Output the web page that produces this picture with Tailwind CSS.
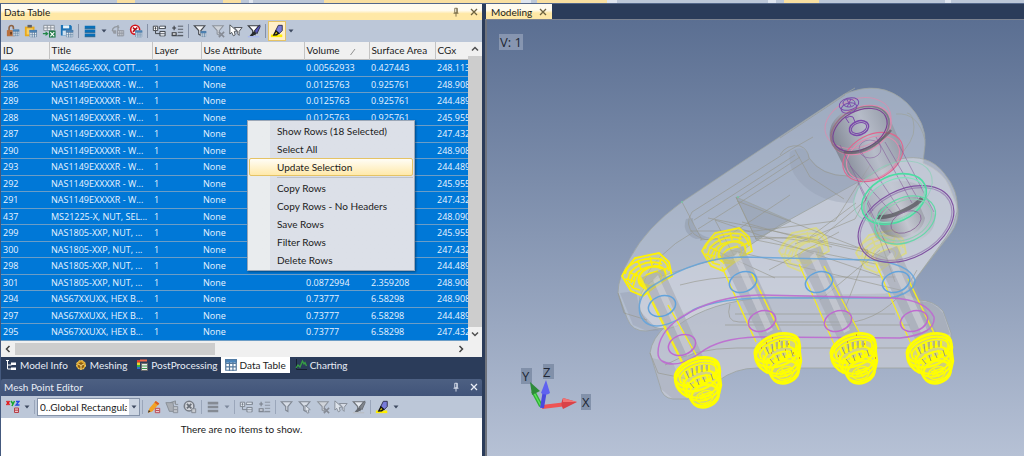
<!DOCTYPE html>
<html lang="en">
<head>
<meta charset="utf-8">
<title>Modeling</title>
<script src="https://cdn.jsdelivr.net/npm/@tailwindcss/browser@4"></script>
</head>
<body class="flex h-screen flex-col overflow-hidden bg-[#2b3c5a] font-[Lato,'Noto_Sans',sans-serif] text-[10px] leading-4 text-[#1b1b1b]">

<!-- Shared icon symbols -->
<svg class="hidden">
  <defs>
    <symbol id="grid" viewBox="0 0 8 8"><path d="M0 0h8v8H0z" fill="#fff"/><path d="M0 0h8v2.5H0z" fill="#4a86bd"/><path d="M.5 .5h7v7h-7zM.5 3h7M.5 5.2h7M3 2v6M5.3 2v6" fill="none" stroke="#54789c" stroke-width=".8"/></symbol>
    <symbol id="lock" viewBox="0 0 16 16"><path d="M3.500 8V4.500a2.500 2.800 0 0 1 5 0V6" fill="none" stroke="#8d6243" stroke-width="1.800"/><path d="M1 7h9v7H1z" fill="#b9713f"/><path d="M5 9h1.500v3H5z" fill="#4b2c16"/><use href="#grid" x="7.500" y="6" width="8" height="8"/></symbol>
    <symbol id="paste" viewBox="0 0 16 16"><path d="M1 3h11v11H1z" fill="#e8a91c"/><path d="M4 1h5v3H4z" fill="#5f6068"/><path d="M3 5h7v7H3z" fill="#f7cf64"/><use href="#grid" x="6" y="6.500" width="9" height="9"/></symbol>
    <symbol id="excel" viewBox="0 0 16 16"><path d="M2 1.500h12v6H2z" fill="#eef0f3" stroke="#848b95"/><path d="M2 4.500h12M6 1.500v6M10 1.500v6" stroke="#848b95"/><path d="M1 11h5M4 9l2.500 2L4 13" fill="none" stroke="#218747" stroke-width="1.300"/><path d="M8 7.500h7.500v8H8z" fill="#237c49"/><path d="M9.500 9.200l4.500 5M14 9.200l-4.500 5" stroke="#fff" stroke-width="1.300"/></symbol>
    <symbol id="save" viewBox="0 0 16 16"><path d="M1 1h11l1.500 1.500V13H1z" fill="#1c72b5"/><path d="M3.500 1.500h7V5h-7z" fill="#e9f2f8"/><path d="M3 7.500h5V13H3z" fill="#cfe0ef"/><use href="#grid" x="6.500" y="6.500" width="9" height="9"/></symbol>
    <symbol id="bars" viewBox="0 0 16 16"><path d="M2 2h12v3H2zM2 6.500h12v3H2zM2 11h12v3H2z" fill="#086fb8"/><path d="M2 5.500h12M2 10h12M2 14.500h12" stroke="#075080"/></symbol>
    <symbol id="bars-off" viewBox="0 0 16 16"><path d="M2 2h12v3H2zM2 6.500h12v3H2zM2 11h12v3H2z" fill="#858b94"/></symbol>
    <symbol id="sync-off" viewBox="0 0 16 16"><path d="M1.500 8a5 5 0 0 1 8-4M8 1v13" fill="none" stroke="#92989f" stroke-width="1.500"/><path d="M1 7h5v4H3z" fill="#969ba3"/><path d="M7.500 7.500h7v6h-7z" fill="#c8ccd3" stroke="#8f959e"/><path d="M7.500 10.500h7M10 8v6M12.500 8v6" stroke="#8f959e"/></symbol>
    <symbol id="stop" viewBox="0 0 16 16"><circle cx="7" cy="6.500" r="6" fill="#d4131b"/><circle cx="7" cy="6.500" r="4.200" fill="#fff"/><path d="M4.500 4l5 5M9.500 4l-5 5" stroke="#b00f16" stroke-width="2"/><use href="#grid" x="7" y="7" width="8.500" height="8.500"/></symbol>
    <symbol id="tree" viewBox="0 0 16 16"><path d="M1.500 2.500h5v5h-5zM3 5h2M4 3.500v3" fill="#fff" stroke="#34373c"/><path d="M9 2.500h6.500v2.500H8zM9 8.500h6v5H9zM4 8v3h5M9.500 11h5" fill="none" stroke="#34373c"/><path d="M9 3h5v1.500H9zM10 9.500h4v1h-4zM10 12h4v1h-4z" fill="#fff"/></symbol>
    <symbol id="collapse" viewBox="0 0 16 16"><path d="M2.500 4.500h4.500M4.700 2v5M2.500 10h4.500v3H2.500z" fill="#eee" stroke="#34373c" stroke-width="1.200"/><path d="M9 2.500h6M9 6h6M9 9.500h6M9 13h6M2 13.500h13" stroke="#4b5058"/></symbol>
    <symbol id="funnel" viewBox="0 0 16 16"><path d="M1.500 2h12L9 7.500V13l-2.500-1.500v-4z" fill="#f2f3f5" stroke="#45494f" stroke-width="1.300"/></symbol>
    <symbol id="funnel-grid" viewBox="0 0 16 16"><use href="#funnel"/><use href="#grid" x="8.500" y="7.500" width="7" height="8"/></symbol>
    <symbol id="funnel-x" viewBox="0 0 16 16"><path d="M2 2h12L9.500 7.500V13L7 11.500v-4z" fill="#d0d4da" stroke="#8c929b" stroke-width="1.200"/><path d="M9 9l6 6M15 9l-6 6" stroke="#858a94" stroke-width="1.700"/></symbol>
    <symbol id="cursor-funnel" viewBox="0 0 16 16"><path d="M6 4h9l-3.500 4.500V13L9.500 11V8z" fill="#f0f0f2" stroke="#43474e"/><path d="M1 1l8 7-3 .5 1 4-2 1-2-4-2 2z" fill="#fff" stroke="#45494e"/></symbol>
    <symbol id="funnel-brush" viewBox="0 0 16 16"><path d="M1.500 2h12L9 7.500V12L6.500 10.500v-3z" fill="#fff" stroke="#383b41" stroke-width="1.300"/><path d="M14.500 1l-6 7 3 3 3.500-8z" fill="#5554bd" stroke="#2b2b40"/><path d="M8 8l3 3-5 3-3-.500z" fill="#272a2e"/><path d="M1 14.500h13" stroke="#a8b7ef" stroke-width="1.500"/></symbol>
    <symbol id="brush" viewBox="0 0 16 16"><path d="M1 12h13v3H1z" fill="#ffee00"/><path d="M9.500 1.500h4.500v6l-4 4-3.500-4z" fill="#777bd9" stroke="#272746"/><path d="M6.500 6.500l4.500 4-3 2.500-5 .5z" fill="#151515"/><path d="M7 9l1.500 1.500-3 1.500z" fill="#f9e500"/></symbol>
    <symbol id="pencil" viewBox="0 0 16 16"><path d="M10 1l4 3-8 9-5 1.500L3 9z" fill="#f2a326"/><path d="M10 1l4 3-1.500 2-4-3.200z" fill="#d95d27"/><path d="M1 14.500l1-3 2 1.500z" fill="#44352e"/><path d="M9.500 9.500h5v5h-5zM10 12h4" fill="#eacbd0" stroke="#b83f48"/></symbol>
    <symbol id="delete-off" viewBox="0 0 16 16"><path d="M1 3h8l2 10H5zM6 3l6-2v4h3" fill="#a9adb4" stroke="#858b94"/><path d="M9.500 7.500h5v7h-5zM10 11h4" fill="#bfc3ca" stroke="#878d96"/></symbol>
    <symbol id="stop-off" viewBox="0 0 16 16"><circle cx="7" cy="7" r="5.500" fill="#d3d6dc" stroke="#777d87" stroke-width="1.800"/><path d="M4.500 4.500l5 5M9.500 4.500l-5 5" stroke="#686e77" stroke-width="2"/><path d="M10 10h4.500v4.500H10z" fill="#c8cbd0" stroke="#7e848d"/></symbol>
    <symbol id="pin" viewBox="0 0 8 12"><path d="M2.500 1.500h3V7h-3zM5 1.500V7M1 7.500h6M4 8v3.500" fill="none" stroke="currentColor"/></symbol>
    <symbol id="close" viewBox="0 0 8 8"><path d="M1 1l6 6M7 1L1 7" stroke="currentColor" stroke-width="1.300"/></symbol>
    <symbol id="caret" viewBox="0 0 6 4"><path d="M0.500 0.500h5L3 3.500z" fill="#3e4a60"/></symbol>
  </defs>
</svg>

<!-- Bottom edge of the ribbon -->
<div class="flex h-1 shrink-0 border-b border-[#53678a] bg-[#bcc7d8] *:h-full *:shrink-0" aria-hidden="true">
  <span class="w-20 bg-[#f9dfa0]"></span><span class="ml-[37px] w-[18px] bg-[#f9dfa0]"></span><span class="ml-[88px] w-[18px] bg-[#f9dfa0]"></span><span class="ml-2 w-1 bg-[#dfe5ef]"></span><span class="ml-[71px] w-[197px] bg-[#f9dfa0]"></span><span class="w-2.5 bg-[#dfe5ef]"></span><span class="ml-1.5 w-[70px] bg-[#f9dfa0]"></span><span class="w-2.5 bg-[#dfe5ef]"></span><span class="ml-[151px] w-2 bg-[#dfe5ef]"></span><span class="ml-2 w-[35px] bg-[#f9dfa0]"></span><span class="ml-[126px] w-1.5 bg-[#dfe5ef]"></span>
</div>

<main class="grid min-h-0 flex-1 grid-cols-[482px_1fr] gap-x-[3px]">

  <!-- Left dock -->
  <div class="flex min-h-0 min-w-0 flex-col border-l border-[#44597e]">
    <section class="relative shrink-0" aria-label="Data Table">
      <header class="flex h-4 items-center bg-linear-to-b from-[#fffbef] from-40% to-[#ffe8a6] to-60% pr-1 pl-[3px]">
        <h2 class="flex-1">Data Table</h2>
        <button class="mr-2.5 text-[#6d6240]" aria-label="Pin"><svg class="h-2.5 w-2"><use href="#pin"/></svg></button>
        <button class="text-[#6d6240]" aria-label="Close"><svg class="size-2"><use href="#close"/></svg></button>
      </header>

      <div class="flex h-[22px] items-center bg-[#bcc7d8] pl-[3px] [&>button]:flex [&>button]:h-5 [&>button]:w-[18px] [&>button]:items-center [&>button]:justify-center [&>i]:mx-[2px] [&>i]:h-3.5 [&>i]:w-px [&>i]:bg-[#8591a7]" role="toolbar" aria-label="Data Table tools">
        <button aria-label="Lock"><svg class="size-3.5"><use href="#lock"/></svg></button>
        <button aria-label="Paste"><svg class="size-3.5"><use href="#paste"/></svg></button>
        <button aria-label="Export to Excel"><svg class="size-3.5"><use href="#excel"/></svg></button>
        <button aria-label="Save"><svg class="size-3.5"><use href="#save"/></svg></button>
        <i></i>
        <button aria-label="Rows"><svg class="size-3.5"><use href="#bars"/></svg></button>
        <svg class="mx-0.5 h-1 w-1.5"><use href="#caret"/></svg>
        <button aria-label="Refresh" disabled><svg class="size-3.5"><use href="#sync-off"/></svg></button>
        <button aria-label="Stop"><svg class="size-3.5"><use href="#stop"/></svg></button>
        <i></i>
        <button aria-label="Expand"><svg class="size-3.5"><use href="#tree"/></svg></button>
        <button aria-label="Collapse"><svg class="size-3.5"><use href="#collapse"/></svg></button>
        <i></i>
        <button aria-label="Filter"><svg class="size-3.5"><use href="#funnel-grid"/></svg></button>
        <button aria-label="Clear filter" disabled><svg class="size-3.5"><use href="#funnel-x"/></svg></button>
        <button aria-label="Filter selection"><svg class="size-3.5"><use href="#cursor-funnel"/></svg></button>
        <button aria-label="Filter highlight"><svg class="size-3.5"><use href="#funnel-brush"/></svg></button>
        <i></i>
        <button class="border border-[#e5c365] bg-[#fff0c9]" aria-label="Highlight" aria-pressed="true"><svg class="size-3.5"><use href="#brush"/></svg></button>
        <svg class="mx-0.5 h-1 w-1.5"><use href="#caret"/></svg>
      </div>

      <div class="flex bg-white">
        <div class="min-w-0 flex-1 overflow-hidden">
          <table class="w-full table-fixed border-collapse text-left [&_td]:p-0 [&_td]:pl-0.5 [&_td]:whitespace-nowrap [&_th]:p-0 [&_th]:pl-0.5 [&_th]:font-normal [&_th]:whitespace-nowrap">
            <colgroup><col class="w-12"><col class="w-[103px]"><col class="w-[49px]"><col class="w-[103px]"><col class="w-[65px]"><col class="w-[66px]"><col></colgroup>
            <thead>
              <tr class="h-[17px] border-b border-[#b8b8b8] bg-[#f0f0f0] [&>th+th]:border-l [&>th+th]:border-[#c4c4c4]">
                <th>ID</th><th>Title</th><th>Layer</th><th>Use Attribute</th>
                <th>Volume <svg class="ml-2 inline h-2 w-1.5" viewBox="0 0 6 8"><path d="M.5 7L5 1" stroke="#909090" fill="none"/></svg></th>
                <th>Surface Area</th><th>CGx</th>
              </tr>
            </thead>
            <tbody id="rows" class="bg-[#0078d7] font-['Open_Sans','Noto_Sans',sans-serif] text-[9px] text-[#e8f3ff]"></tbody>
          </table>
        </div>
        <div class="flex w-3.5 flex-col bg-[#f0f0f0]" aria-hidden="true">
          <svg class="h-3.5 w-3.5" viewBox="0 0 14 14"><path d="M4 8.500l3-3 3 3" fill="none" stroke="#505050" stroke-width="1.500"/></svg>
          <div class="flex-1 bg-[#cdcdcd]"></div>
          <svg class="h-3.5 w-3.5" viewBox="0 0 14 14"><path d="M4 5.500l3 3 3-3" fill="none" stroke="#505050" stroke-width="1.500"/></svg>
        </div>
      </div>
      <div class="flex h-4 items-center bg-[#f0f0f0]" aria-hidden="true">
        <svg class="h-3.5 w-3.5" viewBox="0 0 14 14"><path d="M8.500 4l-3 3 3 3" fill="none" stroke="#404040" stroke-width="1.500"/></svg>
        <div class="h-3 w-[200px] bg-[#cdcdcd]"></div>
        <svg class="mr-3.5 ml-auto h-3.5 w-3.5" viewBox="0 0 14 14"><path d="M5.500 4l3 3-3 3" fill="none" stroke="#404040" stroke-width="1.500"/></svg>
      </div>

      <!-- Context menu -->
      <div class="absolute top-[116px] left-[246px] flex w-[168px] flex-col border border-[#9ba7b7] bg-linear-to-r from-[#e9ecee] from-[22px] to-[#dce0e8] to-[22px] p-px shadow-[1px_1px_2px_#0006] [&>button]:h-[18px] [&>button]:pl-7 [&>button]:text-left" role="menu">
        <button role="menuitem">Show Rows (18 Selected)</button>
        <button role="menuitem">Select All</button>
        <button role="menuitem" class="rounded-xs border border-[#e5c365] bg-linear-to-b from-[#fffdf6] to-[#ffe9a9] pl-[27px]! leading-3.5">Update Selection</button>
        <hr class="mt-px mb-px ml-7 border-[#bec3cb]">
        <button role="menuitem">Copy Rows</button>
        <button role="menuitem">Copy Rows - No Headers</button>
        <button role="menuitem">Save Rows</button>
        <button role="menuitem">Filter Rows</button>
        <button role="menuitem">Delete Rows</button>
      </div>
    </section>

    <nav class="flex h-[22px] shrink-0 items-start text-[#e8edf6] [&>button]:flex [&>button]:h-4 [&>button]:items-center [&>button]:gap-[3px]" aria-label="Panels">
      <button class="ml-1"><svg class="size-3" viewBox="0 0 12 12"><path d="M1 1.500h3M2.500 2v8h4M2.500 6h4" stroke="#fff" fill="none"/><path d="M6 3.500h5v2.500H6zM6 8.500h5V11H6z" fill="#fff"/></svg>Model Info</button>
      <button class="ml-[7px]"><svg class="size-3" viewBox="0 0 12 12"><circle cx="6" cy="6" r="4.500" fill="#dfa429" stroke="#f5d268" stroke-dasharray="2 1"/><path d="M3 5l3-2 3 2v3L6 10 3 8z" fill="#8c5e12"/><path d="M3 5l3 1.500L9 5M6 6.500V10" stroke="#f9dc87" fill="none"/></svg>Meshing</button>
      <button class="ml-[9px]"><svg class="size-3" viewBox="0 0 12 12"><path d="M1 1h3v2.500H1z" fill="#e23b2e"/><path d="M1 3.500h3v2.500H1z" fill="#efd62c"/><path d="M1 6h3v2H1z" fill="#35b34a"/><path d="M1 8h3v2H1z" fill="#2e70d0"/><path d="M4 1.500h7" stroke="#ef694a" stroke-width="2"/><path d="M5.500 4.500h6v7h-6z" fill="#ededed" stroke="#6c6c6c"/><path d="M6 7h5M6 9.500h5" stroke="#3a944b"/></svg>PostProcessing</button>
      <button class="ml-[3px] bg-white px-[4px] text-[#1b1b1b]" aria-current="page"><svg class="size-3"><use href="#grid"/></svg>Data Table</button>
      <button class="ml-[5px]"><svg class="size-3" viewBox="0 0 12 12"><path d="M1.500 0v10.500H12" stroke="#16202f" fill="none"/><path d="M1 9l2-3 2 2 2.500-6L9 5l1-1.500L11.500 7" stroke="#37a044" stroke-width="1.300" fill="none"/></svg>Charting</button>
    </nav>

    <section class="flex min-h-0 flex-1 flex-col" aria-label="Mesh Point Editor">
      <header class="flex h-[17px] shrink-0 items-center rounded-t-xs bg-linear-to-b from-[#4d6082] to-[#41547a] pr-1 pl-[3px] text-[#e8edf6]">
        <h2 class="flex-1">Mesh Point Editor</h2>
        <button class="mr-2.5" aria-label="Pin"><svg class="h-2.5 w-2"><use href="#pin"/></svg></button>
        <button aria-label="Close"><svg class="size-2"><use href="#close"/></svg></button>
      </header>
      <div class="flex h-[22px] shrink-0 items-center bg-[#bcc7d8] pl-[3px] [&>button]:flex [&>button]:h-5 [&>button]:w-[18px] [&>button]:items-center [&>button]:justify-center [&>i]:mx-[2px] [&>i]:h-3.5 [&>i]:w-px [&>i]:bg-[#9aa6ba]" role="toolbar" aria-label="Mesh Point tools">
        <button aria-label="Coordinates"><svg class="size-3.5" viewBox="0 0 14 14"><path d="M.5 1l3 4M3.500 1l-3 4" stroke="#e21b1b" stroke-width="1.500"/><path d="M5 1l1.700 2.500M8.500 1L6 6" stroke="#18a62c" stroke-width="1.500"/><path d="M10 1.500h3L10 5h3.500" stroke="#2048e0" stroke-width="1.300" fill="none"/><path d="M8.500 8h4v4.500h-4zM9 10.200h3.500" fill="#ecc4c8" stroke="#b53f48"/></svg></button>
        <svg class="mx-0.5 h-1 w-1.5"><use href="#caret"/></svg>
        <i></i>
        <div class="relative h-[18px] w-[103px]">
          <select class="h-full w-full appearance-none border border-[#8492a8] bg-white pr-3 pl-0.5" aria-label="Coordinate system"><option>0..Global Rectangular</option></select>
          <span class="pointer-events-none absolute top-px right-px flex h-4 w-2.5 items-center justify-center bg-[#ccd5e2]"><svg class="h-1 w-1.5"><use href="#caret"/></svg></span>
        </div>
        <i></i>
        <button aria-label="Edit"><svg class="size-3.5"><use href="#pencil"/></svg></button>
        <button aria-label="Delete" disabled><svg class="size-3.5"><use href="#delete-off"/></svg></button>
        <button aria-label="Stop" disabled><svg class="size-3.5"><use href="#stop-off"/></svg></button>
        <i></i>
        <button aria-label="Rows" disabled><svg class="size-3.5"><use href="#bars-off"/></svg></button>
        <svg class="mx-0.5 h-1 w-1.5 opacity-50"><use href="#caret"/></svg>
        <i></i>
        <button class="opacity-50" aria-label="Expand" disabled><svg class="size-3.5"><use href="#tree"/></svg></button>
        <button class="opacity-50" aria-label="Collapse" disabled><svg class="size-3.5"><use href="#collapse"/></svg></button>
        <i></i>
        <button class="opacity-50" aria-label="Filter" disabled><svg class="size-3.5"><use href="#funnel"/></svg></button>
        <button class="opacity-50" aria-label="Pick filter" disabled><svg class="size-3.5" viewBox="0 0 16 16"><use href="#funnel"/><path d="M8 6l6 5-2.500.5 1 3-2 .5-1-3-1.500 1z" fill="#fff" stroke="#45494f"/></svg></button>
        <button aria-label="Clear filter" disabled><svg class="size-3.5"><use href="#funnel-x"/></svg></button>
        <button class="opacity-50" aria-label="Filter selection" disabled><svg class="size-3.5"><use href="#cursor-funnel"/></svg></button>
        <button class="opacity-60 grayscale" aria-label="Filter highlight" disabled><svg class="size-3.5"><use href="#funnel-brush"/></svg></button>
        <i></i>
        <button aria-label="Highlight"><svg class="size-3.5"><use href="#brush"/></svg></button>
        <svg class="mx-0.5 h-1 w-1.5"><use href="#caret"/></svg>
      </div>
      <p class="flex-1 bg-white pt-[3px] text-center">There are no items to show.</p>
    </section>
  </div>

  <!-- Modeling viewport -->
  <section class="flex min-h-0 min-w-0 flex-col" aria-label="Modeling">
    <div class="flex h-4 shrink-0 items-end border-b border-[#7c8290]">
      <div class="ml-px flex h-full items-center gap-[7px] bg-linear-to-b from-[#fffbef] from-40% to-[#ffe8a6] to-60% px-[5px]">Modeling <button class="text-[#6d6240]" aria-label="Close Modeling"><svg class="size-2"><use href="#close"/></svg></button></div>
    </div>
    <div class="min-h-0 flex-1 border-l-2 border-[#6f737c] bg-linear-to-b from-[#5b6f92] to-[#b6c1d5]">
      <svg class="h-full w-full" viewBox="487 20 537 436" preserveAspectRatio="xMinYMin meet" role="img" aria-label="Translucent bracket assembly with four bolts">
        <defs>
          <linearGradient id="cyl" x1="0" y1=".4" x2="1" y2="0"><stop offset="0" stop-color="#72757f" stop-opacity=".7"/><stop offset=".45" stop-color="#c4c5cc" stop-opacity=".6"/><stop offset="1" stop-color="#70757f" stop-opacity=".7"/></linearGradient>
          <g id="shank">
            <path d="M-62-84l45 92 20-9L-39-93z" fill="#a2a6af" opacity=".55"/>
            <path d="M-49-82l34 76 6-3-35-78z" fill="#e3e4e8" opacity=".4"/>
          </g>
          <!-- Bolt end, 48 x 52 -->
          <g id="nut" fill="none" stroke="#ffff00">
            <path d="M1 27Q0 13 13 5T39 2q10 4 8 14v18l-1 10q-9 10-19 7L13 40Q3 37 1 27z" fill="#e0dc60" fill-opacity=".7" stroke="none"/>
            <ellipse cx="24" cy="16" rx="23" ry="13" transform="rotate(-20 24 16)" stroke-width="2.800"/>
            <ellipse cx="25" cy="18" rx="19" ry="9" transform="rotate(-20 25 18)" stroke-width="1.500"/>
            <ellipse cx="25" cy="20" rx="23" ry="14" transform="rotate(-20 25 20)" stroke-width="2.200"/>
            <path d="M2 24q2 12 13 17M46 14l2 15-2 9" stroke-width="2.500"/>
            <ellipse cx="28" cy="28" rx="18" ry="13" transform="rotate(-20 28 28)" stroke-width="2"/>
            <ellipse cx="30" cy="32" rx="17" ry="12" transform="rotate(-20 30 32)" stroke-width="2"/>
            <ellipse cx="31" cy="37" rx="15" ry="12" transform="rotate(-20 31 37)" stroke-width="2"/>
            <ellipse cx="32" cy="40" rx="14" ry="11" transform="rotate(-20 32 40)" stroke-width="2.500"/>
            <ellipse cx="32" cy="41" rx="9" ry="6" transform="rotate(-20 32 41)" stroke-width="1.300"/>
            <path d="M5 17l3 10M10 23l3 9M41 6l3 9M39 16l4 7M26 40l12-4M27 43l12-4M29 37l5 8" stroke-width="1.600"/>
            <path d="M11 16l3 7M16 13l2 8M21 11l1 8M26 10v7M31 9v7M36 9v7M14 26l4 6M20 22l3 6M27 20l2 6M33 18l2 6" stroke-width="2"/>
            <path d="M13 15l3 7M19 12l1 8M24 10v7M29 9v7M34 9v6M17 27l4 5M24 23l2 6M30 21l2 5M38 18l2 6" stroke="#8f9079" stroke-width=".9"/>
          </g>
          <!-- Far-side nut, 50 x 44 -->
          <g id="head" fill="none" stroke="#fff200">
            <path d="M4 17L13 6 37 1l10 9 3 14-12 7-17 13-12-5L0 24z" fill="#eeea70" fill-opacity=".35" stroke-width="1.800"/>
            <path d="M3 22q2-9 13-13t23-2q7 4 8 12M6 27q1-9 12-14t22-1M9 31q1-9 11-14t20 0M7 20l9 4M16 9l3 8M28 5l2 8M39 7l-2 7M46 16l-7 3M3 27l9 2" stroke-width="1.700"/>
            <ellipse cx="30" cy="25" rx="14" ry="10" transform="rotate(-25 30 25)" stroke-width="2.200"/>
            <ellipse cx="30" cy="27" rx="10" ry="6" transform="rotate(-25 30 27)" stroke-width="1.300"/>
            <path d="M5 29l6 7 7 2M18 28l4 9M24 23l12-4M15 21l-4 14M23 32l8 4" stroke-width="1.500"/>
          </g>
          <g id="ring"><ellipse rx="14" ry="10" transform="rotate(-20)"/></g>
        </defs>

        <!-- Translucent bodies -->
        <g stroke="#9da3a0" stroke-width=".8">
          <path d="M618 293Q618 277 630 258Q646 228 682 202L790 130L843 95Q880 78 907 103Q927 123 925 145L923 163Q944 172 950 188L958 209Q959 222 951 233L917 277Q910 290 885 294L735 297Q700 302 669 327L647 331Q632 332 627 318Z" fill="#ccd3dd" fill-opacity=".54"/>
          <path d="M650 353Q652 338 667 325Q702 299 740 297H890Q904 290 918 300Q933 300 943 311L951 333Q953 350 938 368H757Q735 368 718 381L688 399H673Q662 398 660 386Z" fill="#ccced5" fill-opacity=".65"/>
          <path d="M640 310Q635 287 662 276Q700 263 737 254L780 225L900 159Q928 153 944 173Q960 192 957 212Q954 226 947 236L917 277Q911 290 897 297L765 298Q711 301 677 326Q650 336 640 310Z" fill="#e0e0e6" fill-opacity=".48"/>
          <path d="M907 113Q913 113 914 127Q915 141 896 159M925 140Q918 112 896 114M843 95l12-7" fill="none"/>
          <path d="M736 197L791 221L756 239Z" fill="#8a93a0" fill-opacity=".35"/>
        </g>
        <path d="M790 152q14-10 20 6 12 17 39 18l12 6-8 21q-34 0-54-22-12-14-9-29z" fill="#8d99ad" opacity=".3"/>
        <path d="M686 219q-5 14 10 20l14-1q-17-4-17-20z" fill="#7e8894" opacity=".3"/>
        <path d="M918 302q14-3 25 11l7 21-15 5-13-22z" fill="#969da9" opacity=".5"/>
        <path d="M620 293l13 32 14 6h12l-19-20-4-20z" fill="#8e99ab" opacity=".35"/>
        <path d="M652 358l9 31 12 10h15l-15-36z" fill="#959dac" opacity=".3"/>

        <!-- Construction edges -->
        <g fill="none" stroke="#96968a" stroke-width=".8" opacity=".75">
          <path d="M682 202l20 38M692 212l98-62 23-13M694 220l101-65M698 229l111-70M736 199l64-42M736 197l20 42M737 201l151 58M708 218l160 32M715 220l165 56M692 212q-8 13 2 22q10 8 24 5M690 231h65l80-10 35-56M700 240q60-8 110 2M755 239l44-2 70 16M795 244l60-25 18-34M845 95L780 138M618 293l6 20 23 7M660 257q-14 14-17 30M660 257q15-15 32-24M730 304q-5 18 9 18h115q40-8 63-52M735 314h160M680 285q30-8 60-8h155M665 365q30-17 72-17h190M650 353l8 20 30 6M725 325h185M868 250l-24 61M880 250l-60 50M780 155q6-11 20-9 8 3 9 12 12 18 39 18M795 150l15 27 34 22M856 203l-46 34M866 200l-48 40M742 222l90 25M756 240l120 24M790 195l-80 53 65 30M715 220l24 45M839 232l-70 38M870 212l25 70M730 250l170 40"/>
        </g>
        <circle cx="682" cy="202" r="1" fill="#78c5a4"/><circle cx="738" cy="197" r="1" fill="#78c5a4"/>

        <!-- Far-side nuts -->
        <use href="#head" x="622" y="252"/>
        <use href="#head" x="702" y="227" opacity=".85"/>
        <use href="#head" x="779" y="227" opacity=".35"/>
        <use href="#head" x="856" y="229" opacity=".35"/>

        <!-- Shanks -->
        <use href="#shank" x="702" y="362"/><use href="#shank" x="782" y="339"/><use href="#shank" x="859" y="339"/><use href="#shank" x="936" y="339"/>
        <g fill="none" stroke="#f5eb22" stroke-width="1.500">
          <path d="M640 277l45 91" stroke-width="2.400"/><path d="M668 305l31 55M751 272l28 58M722 267l34 75"/><path d="M799 264l35 80M824 266l35 66M876 264l35 80" stroke-width="1.200"/><path d="M908 279l26 54"/>
        </g>

        <!-- Gasket outlines -->
        <g fill="none" stroke="#62a3dc" stroke-width="1.500">
          <path d="M640 314Q636 296 654 285Q698 257 743 257L870 260Q909 263 915 280Q916 292 890 298H790Q724 296 693 310Q673 325 657 326Q644 326 640 314Z" opacity=".85"/>
          <use href="#ring" x="662" y="306"/><use href="#ring" x="743" y="282"/><use href="#ring" x="819" y="282"/><use href="#ring" x="896" y="282"/>
        </g>
        <g fill="none" stroke="#be6ad0" stroke-width="1.500">
          <path d="M658 353Q658 333 680 318Q714 296 760 295L893 298Q926 300 934 317Q936 334 900 338L757 337Q719 338 700 353Q676 370 662 361Q658 358 658 353Z" opacity=".9"/>
          <use href="#ring" x="682" y="345"/><use href="#ring" x="762" y="321"/><use href="#ring" x="838" y="321"/><use href="#ring" x="914" y="321"/>
        </g>

        <!-- Bushings and pin -->
        <path d="M830 139Q827 122 845 111 868 101 887 112L903 149Q903 165 886 175 864 186 848 175Z" fill="url(#cyl)"/>
        <path d="M863 211q-2-17 20-27 25-7 38 3l14 28q2 17-17 26-26 9-42-3z" fill="url(#cyl)" opacity=".45"/>
        <path d="M878 218q-3-8 10-14 18-9 28-7l9 21q-2 14-20 19-17 3-24-8z" fill="url(#cyl)" opacity=".8"/>
        <g fill="none">
          <g stroke="#e08aae" stroke-width="1.100">
            <ellipse cx="858" cy="123" rx="34" ry="24" transform="rotate(-20 858 123)" opacity=".7"/>
            <ellipse cx="861" cy="130" rx="32" ry="22" transform="rotate(-28 861 130)"/>
            <ellipse cx="873" cy="157" rx="32" ry="22" transform="rotate(-28 873 157)" stroke="#e0668e"/>
            <ellipse cx="873" cy="158" rx="28" ry="20" transform="rotate(-28 873 158)"/>
          </g>
          <ellipse cx="860" cy="130" rx="29" ry="19" transform="rotate(-28 860 130)" stroke="#7b4493" stroke-width="1.200"/>
          <ellipse cx="860" cy="130" rx="31" ry="21" transform="rotate(-28 860 130)" stroke="#65636b" stroke-width="1.500" opacity=".6"/>
          <path d="M844 152q13 2 28-6 14-9 19-16" stroke="#5d5a62" stroke-width="2.500" opacity=".7"/>
          <path d="M850 166l43 48M860 150l40 60M876 137l36 66M885 142l33 57M840 145l33 66M858 183l32 70M899 145l35 67" stroke="#7c4d93" stroke-width=".7" opacity=".7"/>
          <g stroke="#7b48ab" stroke-width="1"><ellipse cx="849" cy="104" rx="10" ry="6" transform="rotate(-15 849 104)"/><ellipse cx="849" cy="103" rx="6" ry="4"/><ellipse cx="849" cy="108" rx="8" ry="5" transform="rotate(-15 849 108)"/><path d="M845 117l4 6M847 100l4 6M851 99l-4 8M846 118q4-3 7-1l2 5"/><ellipse cx="859" cy="128" rx="10" ry="7" transform="rotate(-20 859 128)" stroke-width="1.500"/><ellipse cx="859" cy="128" rx="8" ry="5" transform="rotate(-20 859 128)"/></g>
          <ellipse cx="870" cy="149" rx="11" ry="9" stroke="#8b5f9f" stroke-width=".8" opacity=".7"/>
          <g stroke="#8053a2" stroke-width="1.200"><ellipse cx="906" cy="224" rx="51" ry="34" transform="rotate(-28 906 224)"/><ellipse cx="906" cy="224" rx="49" ry="32" transform="rotate(-28 906 224)" opacity=".5"/></g>
          <ellipse cx="893" cy="192" rx="42" ry="27" transform="rotate(-28 893 192)" stroke="#84d1b3" opacity=".65"/>
          <ellipse cx="894" cy="199" rx="34" ry="23" transform="rotate(-25 894 199)" stroke="#4cdda2" stroke-width="1.600"/>
          <ellipse cx="895" cy="200" rx="31" ry="20" transform="rotate(-25 895 200)" stroke="#83e1bd" stroke-width="1.100"/>
          <path d="M877 217q12 1 26-6 14-6 19-13" stroke="#56545c" stroke-width="4" opacity=".75"/>
          <ellipse cx="905" cy="220" rx="32" ry="22" transform="rotate(-25 905 220)" stroke="#67d7aa" stroke-width="1.300"/>
          <ellipse cx="905" cy="220" rx="28" ry="19" transform="rotate(-25 905 220)" stroke="#91cdb5"/>
          <ellipse cx="906" cy="222" rx="16" ry="10" transform="rotate(-25 906 222)" stroke="#8a6a99" stroke-width=".8"/>
        </g>

        <!-- Near-side bolt ends -->
        <use href="#nut" x="673" y="356"/><use href="#nut" x="753" y="332"/><use href="#nut" x="829" y="332"/><use href="#nut" x="905" y="332"/>
        <path d="M761 348h1M766 343h1M772 338h1M779 341h1M788 344h1M793 353h1M785 350h1M799 358h1M771 353h1M847 342h1M856 335h1M864 344h1M838 356h1M875 358h1" stroke="#d98a18" stroke-width="1.500"/>

        <!-- View label and axis triad -->
        <g fill="#76869f" fill-opacity=".75"><path d="M499 34h24v16h-24z" fill="#94a2ba"/><path d="M521 368h11v16h-11zM543 364h11v15h-11zM581 394h10v16h-10z"/></g>
        <g class="font-['Open_Sans',sans-serif] text-[13px]" fill="#202735">
          <text x="500" y="47">V: 1</text><text x="522" y="381">Y</text><text x="543" y="377">Z</text><text x="582" y="407">X</text>
        </g>
        <path d="M541 406l-8-15" stroke="#2fae37" stroke-width="4"/><path d="M541 406l-8-15" stroke="#5ee35d" stroke-width="1.500"/>
        <path d="M530 382l10 9-8 4z" fill="#2d8b3a"/>
        <path d="M542 407l25-3" stroke="#ee5454" stroke-width="4"/><path d="M577 402l-14-4q-3 6 0 11z" fill="#d94248"/><path d="M577 402l-14-4v4z" fill="#f07474"/>
        <path d="M542 408l3-18" stroke="#4a4ade" stroke-width="4"/><path d="M546 380l-5 13q5 3 9 0z" fill="#5f62f0"/>
      </svg>
    </div>
  </section>
</main>

<script>
  const washer = ['NAS1149EXXXXR - W...', '0.0125763', '0.925761'];
  const nut = ['NAS1805-XXP, NUT, ...', '0.0872994', '2.359208'];
  const bolt = ['NAS67XXUXX, HEX B...', '0.73777', '6.58298'];
  const parts = [
    [436, ['MS24665-XXX, COTT...', '0.00562933', '0.427443'], '248.113'],
    [286, washer, '248.908'], [289, washer, '244.489'], [288, washer, '245.955'], [287, washer, '247.432'],
    [290, washer, '248.908'], [293, washer, '244.489'], [292, washer, '245.955'], [291, washer, '247.432'],
    [437, ['MS21225-X, NUT, SEL...', '', ''], '248.090'],
    [299, nut, '245.955'], [300, nut, '247.432'], [298, nut, '244.489'], [301, nut, '248.908'],
    [294, bolt, '248.908'], [297, bolt, '244.489'], [295, bolt, '247.432']
  ];
  document.getElementById('rows').innerHTML = parts.map(([id, [title, volume, area], cgx], r) => {
    const covered = r >= 4 && r <= 12;
    return `<tr class="h-4 border-b border-[#6c9dc6] leading-[15px] odd:h-[17px]">${[id, title, 1, 'None', covered ? '' : volume, covered ? '' : area, cgx]
      .map(v => `<td>${v}</td>`).join('')}</tr>`;
  }).join('');
</script>
</body>
</html>
